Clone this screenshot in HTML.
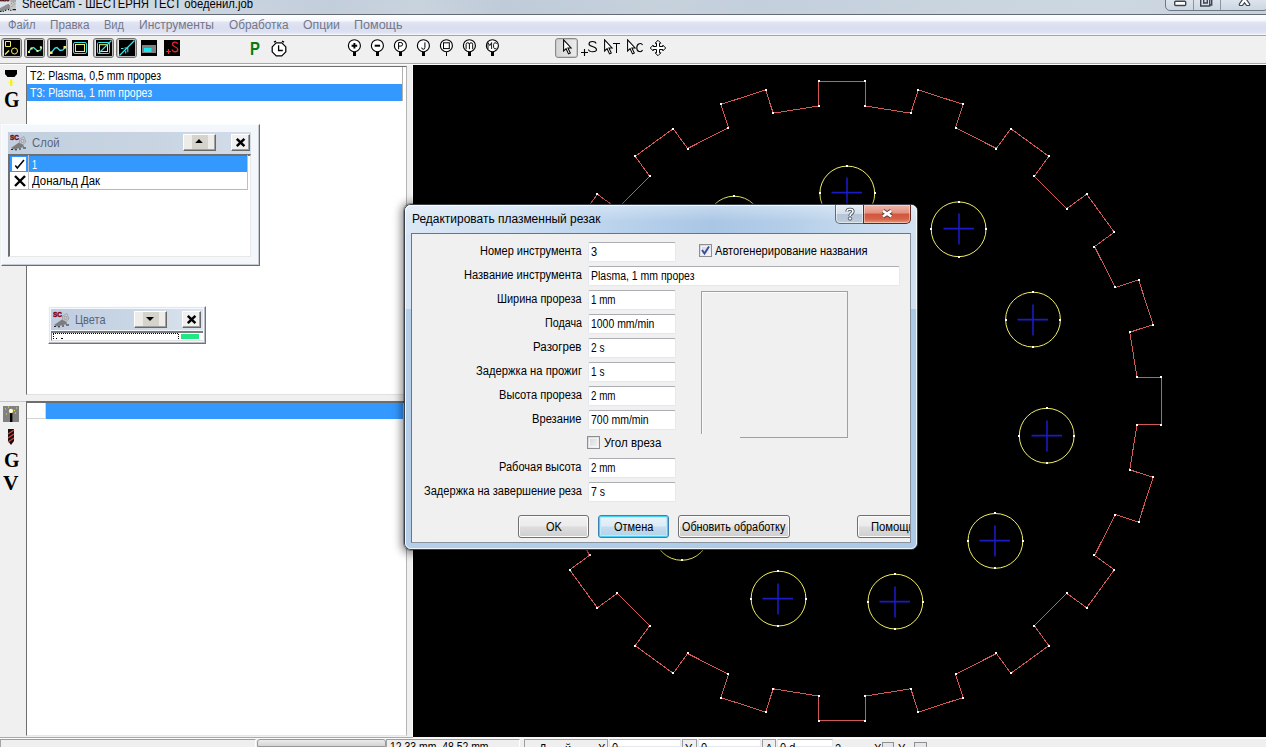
<!DOCTYPE html>
<html><head><meta charset="utf-8"><title>SheetCam</title><style>
*{box-sizing:border-box;margin:0;padding:0}
html,body{width:1266px;height:747px;overflow:hidden;background:#f0f0f0;font-family:"Liberation Sans",sans-serif;}
.a{position:absolute}
.tb{position:absolute;border:1px solid #8a8a8a;border-radius:3px;background:linear-gradient(#d8d8d8,#f4f4f4);box-shadow:inset 0 0 0 1px #c8c8c8}
.ic{position:absolute;width:16px;height:16px}
.fld{position:absolute;height:20px;background:#fff;border:1px solid #e3e9ef;border-top-color:#abadb3;border-radius:2px}
.btn{position:absolute;height:23px;border:1px solid #707070;border-radius:3px;background:linear-gradient(#f2f2f2 0%,#ebebeb 48%,#dddddd 52%,#cfcfcf 100%);box-shadow:inset 0 0 0 1px #fcfcfc}
.r3{position:absolute;background:#f0f0f0;border:1px solid;border-color:#fff #696969 #696969 #fff;box-shadow:inset -1px -1px 0 #a0a0a0}
</style></head><body>
<div class="a" style="left:0;top:0;width:1266px;height:14px;background:linear-gradient(90deg,#dbe2ea 0%,#cfd8e2 12%,#c3cedb 26%,#c9d3de 33%,#bfcbd8 40%,#c6d1dc 52%,#c3cfdb 60%,#c9d4df 75%,#cdd7e1 88%,#c6d1dc 100%)"></div>
<div class="a" style="left:0;top:14px;width:1266px;height:1px;background:#646b75"></div>
<svg class="a" style="left:0;top:0" width="18" height="13" viewBox="0 0 18 13"><rect x="0" y="0" width="9.5" height="1.4" fill="#d88a90"/><path d="M0.5 0v.8h2V0M3.5 0v.9h2.2V0M6.8 0v.8h2V0" fill="none" stroke="#3a0a10" stroke-width="1"/><path d="M0 8 L8.5 3.8 L11 6.5 L11 8.5 L3 11 L0 11.3Z" fill="#8e8e8e"/><path d="M0 10.2l3.5-1.2v2L0 11.6z" fill="#7a8a88"/><rect x="10" y="0" width="6" height="9" rx="1.5" fill="#c6c6c6"/><path d="M10.5 0h5.5v2h-5.5z" fill="#a8aaa8"/><path d="M11 3.5h1M13 2.5h1M12.5 5h1M11.5 6.5h1M14 4h1" stroke="#8a8a8a" stroke-width=".8"/><path d="M0 11.5h1.5M2.8 11.5h1M5 10.4h1.2M8 9.6h1.2M10 10.3h1.5M12.5 9.6h3.5" stroke="#181818" stroke-width="1.1"/></svg>
<span style="position:absolute;left:21.70px;top:-1.86px;font:normal 12px/12px 'Liberation Sans', sans-serif;color:#000;white-space:nowrap;transform-origin:0 0;transform:scaleX(0.9387);">SheetCam - ШЕСТЕРНЯ ТЕСТ обеденил.job</span>
<div class="a" style="left:1165px;top:-6px;width:103px;height:17px;border:1px solid #6d7885;border-radius:0 0 4px 5px;background:linear-gradient(#e4eaf1,#ccd6e1)"></div>
<div class="a" style="left:1193px;top:0;width:1px;height:10px;background:#8a95a3"></div><div class="a" style="left:1220px;top:0;width:1px;height:10px;background:#8a95a3"></div>
<svg class="a" style="left:1166px;top:0" width="100" height="10" viewBox="0 0 100 10" fill="none" stroke="#3c4550" stroke-width="1.4"><rect x="8.7" y="1.3" width="11" height="4.2" rx="1" fill="#fff"/><path d="M34.7 -1v7h9V-1M37.7 -1v4h3.6V-1M43.7 5h2V-1" /><path d="M77.2 -1.5 L73.4 4 Q72.9 5.5 74.5 5.5 H76.4 L78.5 2.8 L80.6 5.5 H82.5 Q84.1 5.5 83.6 4 L79.8 -1.5" fill="#fff" stroke-width="1.2"/></svg>
<div class="a" style="left:0;top:15px;width:1266px;height:19px;background:linear-gradient(#ffffff 0,#f6f7fc 6px,#e1e5f3 7px,#d9def0 13px,#dde1f2 17px,#e8ebf6 19px)"></div>
<div class="a" style="left:0;top:34px;width:1266px;height:1px;background:#f4f5fa"></div><div class="a" style="left:0;top:35px;width:1266px;height:1px;background:#a3a3a8"></div>
<span style="position:absolute;left:7.50px;top:19.04px;font:normal 12px/12px 'Liberation Sans', sans-serif;color:#73778a;white-space:nowrap;transform-origin:0 0;transform:scaleX(0.9317);">Файл</span>
<span style="position:absolute;left:50.00px;top:19.04px;font:normal 12px/12px 'Liberation Sans', sans-serif;color:#73778a;white-space:nowrap;transform-origin:0 0;transform:scaleX(0.9742);">Правка</span>
<span style="position:absolute;left:104.00px;top:19.04px;font:normal 12px/12px 'Liberation Sans', sans-serif;color:#73778a;white-space:nowrap;transform-origin:0 0;transform:scaleX(0.9209);">Вид</span>
<span style="position:absolute;left:139.00px;top:19.04px;font:normal 12px/12px 'Liberation Sans', sans-serif;color:#73778a;white-space:nowrap;transform-origin:0 0;transform:scaleX(1.0023);">Инструменты</span>
<span style="position:absolute;left:229.00px;top:19.04px;font:normal 12px/12px 'Liberation Sans', sans-serif;color:#73778a;white-space:nowrap;transform-origin:0 0;transform:scaleX(0.9830);">Обработка</span>
<span style="position:absolute;left:303.00px;top:19.04px;font:normal 12px/12px 'Liberation Sans', sans-serif;color:#73778a;white-space:nowrap;transform-origin:0 0;transform:scaleX(1.0242);">Опции</span>
<span style="position:absolute;left:354.00px;top:19.04px;font:normal 12px/12px 'Liberation Sans', sans-serif;color:#73778a;white-space:nowrap;transform-origin:0 0;transform:scaleX(1.0462);">Помощь</span>
<div class="a" style="left:0;top:36px;width:1266px;height:27px;background:#f0f0f0"></div>
<div class="a" style="left:0;top:63px;width:1266px;height:1px;background:#a8a8a8"></div><div class="a" style="left:0;top:64px;width:1266px;height:1px;background:#fdfdfd"></div>
<div class="tb" style="left:1px;top:38px;width:21px;height:20px;border-color:#707070;box-shadow:inset 0 0 0 1px #bababa;background:#e8e8e8"></div>
<div class="tb" style="left:24px;top:38px;width:21px;height:20px;border-color:#707070;box-shadow:inset 0 0 0 1px #bababa;background:#e8e8e8"></div>
<div class="tb" style="left:47px;top:38px;width:21px;height:20px;border-color:#707070;box-shadow:inset 0 0 0 1px #bababa;background:#e8e8e8"></div>
<div class="tb" style="left:93px;top:38px;width:21px;height:20px;border-color:#707070;box-shadow:inset 0 0 0 1px #bababa;background:#e8e8e8"></div>
<div class="tb" style="left:116px;top:38px;width:21px;height:20px;border-color:#707070;box-shadow:inset 0 0 0 1px #bababa;background:#e8e8e8"></div>
<svg class="ic" style="left:4px;top:40px" viewBox="0 0 16 16" fill="none"><rect width="16" height="16" fill="#000"/><path d="M1.5 1.5h5v5h-5z" stroke="#f0f060"/><circle cx="10.5" cy="11" r="3" stroke="#f0f060"/><path d="M1 14.5 L5 10.5" stroke="#f0f060" stroke-width="1.3"/></svg>
<svg class="ic" style="left:27px;top:40px" viewBox="0 0 16 16" fill="none"><rect width="16" height="16" fill="#000"/><path d="M1.5 12.5 L4 8.5 L6.5 7.5 L10.5 11 L13.5 10 L14.5 8 L13 6.5" stroke="#40e0e8" stroke-width="1.3"/><rect x="1" y="11" width="2" height="2" fill="#f0f060"/><rect x="3.5" y="7.5" width="2" height="2" fill="#f0f060"/><rect x="9.5" y="10" width="2" height="2" fill="#f0f060"/><rect x="13" y="6.5" width="2" height="2" fill="#f0f060"/></svg>
<svg class="ic" style="left:50px;top:40px" viewBox="0 0 16 16" fill="none"><rect width="16" height="16" fill="#000"/><path d="M1 13 L5 8 L7 7.5 L10 10.5 L13 10 L15 7.5" stroke="#40e0e8" stroke-width="1.3"/><rect x="0" y="11.5" width="2.5" height="2.5" fill="#f0f060"/><rect x="13.5" y="6" width="2.5" height="2.5" fill="#f0f060"/></svg>
<svg class="ic" style="left:72px;top:40px" viewBox="0 0 16 16" fill="none"><rect width="16" height="16" fill="#000"/><rect x="1.5" y="2.5" width="13" height="11" rx="1.5" stroke="#40e0e8"/><rect x="3.5" y="4.5" width="9" height="7" stroke="#f0f060"/></svg>
<svg class="ic" style="left:96px;top:40px" viewBox="0 0 16 16" fill="none"><rect width="16" height="16" fill="#000"/><rect x="1.5" y="2.5" width="12" height="11" rx="1" stroke="#40e0e8"/><rect x="3.5" y="4.7" width="8" height="6.8" stroke="#f0f060"/><path d="M2.5 13.5 L15.5 0.5" stroke="#40e0e8" stroke-width="1.1"/></svg>
<svg class="ic" style="left:119px;top:40px" viewBox="0 0 16 16" fill="none"><rect width="16" height="16" fill="#000"/><path d="M0.5 15.5 L15.5 0.5" stroke="#40e0e8" stroke-width="1.2"/><path d="M2 8.5h2.5 M5.5 8h3.3v4.3 M6.7 10.8v2.7" stroke="#40e0e8" stroke-width="1.1"/></svg>
<svg class="ic" style="left:141px;top:40px" viewBox="0 0 16 16" fill="none"><rect width="16" height="16" fill="#000"/><rect x="1" y="5" width="14" height="8" fill="#808080"/><rect x="3" y="8" width="7.5" height="4" fill="#18e8f0"/></svg>
<svg class="ic" style="left:164px;top:40px" viewBox="0 0 16 16" fill="none"><rect width="16" height="16" fill="#000"/><path d="M2 11.5h5M4.5 9v5" stroke="#e02828" stroke-width="1.2"/><path d="M13.5 4 C13 1.5 8.5 1.5 8.5 4.5 C8.5 7 13.8 6.5 13.8 9.5 C13.8 12.5 8.5 12.5 8.2 9.5" stroke="#e02828" stroke-width="1.3"/></svg>
<span style="position:absolute;left:250.20px;top:39.76px;font:bold 18px/18px 'Liberation Sans', sans-serif;color:#0a7a0a;white-space:nowrap;transform-origin:0 0;transform:scaleX(0.8239);">P</span>
<svg class="a" style="left:270px;top:39px" width="18" height="18" viewBox="0 0 18 18" fill="none" stroke="#000"><path d="M6.2 3.9h5.6l4 4v5l-4 4H6.2l-4-4v-5z" stroke-width="1.25" fill="#fff" stroke-linejoin="round"/><path d="M8.6 6.3v5.2h4.2" stroke-width="1.3"/><path d="M4 3.2 L6 2.2 M14 3.2 L12 2.2" stroke-width="1.4"/></svg>
<svg class="a" style="left:345px;top:37px" width="18" height="20" viewBox="-9 -9 18 20" fill="none" stroke="#000"><circle cx="0.4" cy="-0.3" r="6" fill="#fff" stroke-width="1.15"/><path d="M0.5 5.6v4.4" stroke-width="3" shape-rendering="crispEdges"/><path d="M-2.4 -0.3h5.6M0.4 -3.1v5.6" stroke-width="1.9"/></svg>
<svg class="a" style="left:368px;top:37px" width="18" height="20" viewBox="-9 -9 18 20" fill="none" stroke="#000"><circle cx="0.4" cy="-0.3" r="6" fill="#fff" stroke-width="1.15"/><path d="M0.5 5.6v4.4" stroke-width="3" shape-rendering="crispEdges"/><path d="M-2.3 -0.3h5.4" stroke-width="2"/></svg>
<svg class="a" style="left:391px;top:37px" width="18" height="20" viewBox="-9 -9 18 20" fill="none" stroke="#000"><circle cx="0.4" cy="-0.3" r="6" fill="#fff" stroke-width="1.15"/><path d="M0.5 5.6v4.4" stroke-width="3" shape-rendering="crispEdges"/><path d="M-1.4 3.3v-6.8h2.2a1.8 1.8 0 0 1 0 3.6H-1.4" stroke-width="1"/></svg>
<svg class="a" style="left:414px;top:37px" width="18" height="20" viewBox="-9 -9 18 20" fill="none" stroke="#000"><circle cx="0.4" cy="-0.3" r="6" fill="#fff" stroke-width="1.15"/><path d="M0.5 5.6v4.4" stroke-width="3" shape-rendering="crispEdges"/><path d="M1.9 -3.6v5.2a1.6 1.6 0 0 1 -3.2 0" stroke-width="1"/></svg>
<svg class="a" style="left:437px;top:37px" width="18" height="20" viewBox="-9 -9 18 20" fill="none" stroke="#000"><circle cx="0.4" cy="-0.3" r="6" fill="#fff" stroke-width="1.15"/><path d="M0.5 5.6v4.4" stroke-width="1" shape-rendering="crispEdges"/><rect x="-2.5" y="-3.2" width="5.8" height="5.8" stroke-width="1"/></svg>
<svg class="a" style="left:460px;top:37px" width="18" height="20" viewBox="-9 -9 18 20" fill="none" stroke="#000"><circle cx="0.4" cy="-0.3" r="6" fill="#fff" stroke-width="1.15"/><path d="M0.5 5.6v4.4" stroke-width="3" shape-rendering="crispEdges"/><path d="M-2.9 3.2v-4.8a1.65 1.65 0 0 1 3.3 0v4.8M0.4 -1.6a1.65 1.65 0 0 1 3.3 0v4.8" stroke-width="1"/></svg>
<svg class="a" style="left:483px;top:37px" width="18" height="20" viewBox="-9 -9 18 20" fill="none" stroke="#000"><circle cx="0.4" cy="-0.3" r="6" fill="#fff" stroke-width="1.15"/><path d="M0.5 5.6v4.4" stroke-width="3" shape-rendering="crispEdges"/><path d="M-4 3v-6.4l1.8 3l1.8-3v6.4 M4.6 -2.2a1.6 2 0 0 0 -3 .6v2.8a1.6 2 0 0 0 3 .6" stroke-width=".9"/></svg>
<div class="tb" style="left:555px;top:38px;width:23px;height:20px;background:linear-gradient(90deg,#d4d4d4,#ececec)"></div>
<svg class="a" style="left:563px;top:39px" width="12" height="18" viewBox="0 0 12 18"><path d="M0.6 0.8v11.2l2.5-2.3l2.4 5.2l1.8-0.9l-2.4-5h3.2z" fill="#fff" stroke="#000" stroke-width="1.05"/></svg>
<svg class="a" style="left:580px;top:39px" width="20" height="18" viewBox="0 0 20 18" fill="none" stroke="#000"><path d="M1 13.5h7M4.5 10v7" stroke-width="1.1"/><path d="M16 4.5C15.5 2 9 1.5 9 5C9 8 16.5 7 16.5 10.5C16.5 13.5 9 13.5 8.5 10.5" stroke-width="1.1"/></svg>
<svg class="a" style="left:604px;top:39px" width="20" height="18" viewBox="0 0 20 18"><path d="M0.6 0.8v11.2l2.5-2.3l2.4 5.2l1.8-0.9l-2.4-5h3.2z" fill="#fff" stroke="#000" stroke-width="1.05"/><path d="M9 4.5h7M12.5 4v10" stroke="#000" stroke-width="1" fill="none" shape-rendering="crispEdges"/></svg>
<svg class="a" style="left:627px;top:39px" width="20" height="18" viewBox="0 0 20 18"><path d="M0.6 0.8v11.2l2.5-2.3l2.4 5.2l1.8-0.9l-2.4-5h3.2z" fill="#fff" stroke="#000" stroke-width="1.05"/><path d="M15.5 6C14.5 3.8 9.8 3.8 9.8 8.7C9.8 13.5 14.5 13.5 15.5 11" stroke="#000" stroke-width="1.1" fill="none"/></svg>
<svg class="a" style="left:649px;top:39px" width="18" height="18" viewBox="-9 -9 18 18"><path d="M0 -7.7L2.9 -4.8H1.5V-1.5H4.8V-2.9L7.7 0L4.8 2.9V1.5H1.5V4.8H2.9L0 7.7L-2.9 4.8H-1.5V1.5H-4.8V2.9L-7.7 0L-4.8 -2.9V-1.5H-1.5V-4.8H-2.9Z" fill="#fff" stroke="#000" stroke-width="1" stroke-linejoin="miter"/></svg>
<div class="a" style="left:0;top:65px;width:413px;height:672px;background:#f0f0f0"></div>
<div class="a" style="left:26px;top:66px;width:381px;height:329px;background:#fff;border-left:1px solid #6e6e6e;border-top:1px solid #6e6e6e;border-right:1px solid #b4b4b4;border-bottom:1px solid #e0e0e0"></div>
<div class="a" style="left:402px;top:67px;width:1px;height:34px;background:#b0b0b0"></div>
<div class="a" style="left:27px;top:84px;width:375px;height:17px;background:#3399ff"></div>
<span style="position:absolute;left:30.00px;top:69.84px;font:normal 12px/12px 'Liberation Sans', sans-serif;color:#000;white-space:nowrap;transform-origin:0 0;transform:scaleX(0.8784);">T2: Plasma, 0,5 mm прорез</span>
<span style="position:absolute;left:30.00px;top:86.84px;font:normal 12px/12px 'Liberation Sans', sans-serif;color:#fff;white-space:nowrap;transform-origin:0 0;transform:scaleX(0.8769);">T3: Plasma, 1 mm прорез</span>
<div class="a" style="left:412px;top:65px;width:1px;height:673px;background:#fafafa"></div>
<svg class="a" style="left:4px;top:69px" width="15" height="18" viewBox="0 0 15 18"><path d="M1 1h12v4l-2.5 3h-7L1 5z" fill="#000"/><rect x="6" y="10.5" width="2.4" height="6.5" fill="#f4f020"/><path d="M4 13.5h1.2M9.2 13.5h1.2" stroke="#f6f480" stroke-width="1.5"/></svg>
<span style="position:absolute;left:4.00px;top:88.24px;font:bold 23px/23px 'Liberation Serif', serif;color:#000;white-space:nowrap;transform-origin:0 0;transform:scaleX(0.8664);">G</span>
<div class="a" style="left:0;top:401px;width:26px;height:1px;background:#c8c8c8"></div>
<div class="a" style="left:26px;top:401px;width:381px;height:335px;background:#fff;border-left:1px solid #6e6e6e;border-top:2px solid #6e6e6e;border-right:1px solid #b4b4b4;border-bottom:1px solid #e8e8e8"></div>
<div class="a" style="left:46px;top:403px;width:357px;height:16px;background:#3399ff"></div>
<div class="a" style="left:27px;top:418px;width:19px;height:1px;background:#d4d4d4"></div><div class="a" style="left:45px;top:403px;width:1px;height:16px;background:#d4d4d4"></div>
<svg class="a" style="left:3px;top:406px" width="16" height="16" viewBox="0 0 16 16"><rect width="16" height="16" fill="#808080"/><rect x="7" y="6" width="2.4" height="10" fill="#000"/><circle cx="8" cy="5" r="2.2" fill="#fff4b0"/><circle cx="8" cy="5" r="1.2" fill="#fff"/><path d="M2 3h1M13 2h1M3 8h1M12 7h1M5 1h1M11 4.5h1" stroke="#f8e060" stroke-width="1"/></svg>
<svg class="a" style="left:7px;top:428px" width="8" height="18" viewBox="0 0 8 18"><path d="M1 1h6v12l-3 4l-3-4z" fill="#181010"/><path d="M1 6l6-4M1 10l6-4M1 14l6-4" stroke="#d04848" stroke-width="1.3"/></svg>
<span style="position:absolute;left:3.50px;top:448.57px;font:bold 22px/22px 'Liberation Serif', serif;color:#000;white-space:nowrap;transform-origin:0 0;transform:scaleX(0.9051);">G</span>
<span style="position:absolute;left:2.50px;top:472.71px;font:bold 21px/21px 'Liberation Serif', serif;color:#000;white-space:nowrap;transform-origin:0 0;transform:scaleX(1.0216);">V</span>
<div class="a" style="left:1px;top:124px;width:259px;height:142px;background:#f3f6fa;border:1px solid;border-color:#fbfcfe #6b6b6b #6b6b6b #fbfcfe;box-shadow:inset -1px -1px 0 #c8ccd2"></div>
<div class="a" style="left:8px;top:132px;width:243px;height:22px;background:linear-gradient(90deg,#c2cfde,#c8d4e2 60%,#d3dde9)"></div>
<svg class="a" style="left:10px;top:134px" width="17" height="17" viewBox="0 0 17 17"><text x="0" y="6.2" font-family="Liberation Sans" font-weight="bold" font-size="7.5" fill="#d81428" stroke="#5a0008" stroke-width=".5" textLength="9" lengthAdjust="spacingAndGlyphs">SC</text><path d="M1 14 L9 8.5 L13 10 L14 13 L4 15.5z" fill="#7c7c7c"/><path d="M9.5 5l4.5-2.5l2 5.5l-3 2.5l-3.5-1.5z" fill="#c9ccd0" stroke="#8c9096" stroke-width=".6"/><circle cx="12.5" cy="6.9" r="1.6" fill="none" stroke="#8a8a8a" stroke-width=".7"/><path d="M1 15.5h2M5 15.8h2M9 15h2M13 14h3" stroke="#222" stroke-width="1"/></svg>
<span style="position:absolute;left:32.00px;top:135.50px;font:normal 13px/13px 'Liberation Sans', sans-serif;color:#56657c;white-space:nowrap;transform-origin:0 0;transform:scaleX(0.8696);">Слой</span>
<div class="r3" style="left:183px;top:134px;width:33px;height:17px;background:linear-gradient(90deg,#eeece8 0,#eeece8 8px,#d6d3cc 8px,#d6d3cc 24px,#eeece8 24px)"></div>
<svg class="a" style="left:194.5px;top:139.3px" width="8" height="4.2" viewBox="0 0 8 4.2"><path d="M0 4.2 L4 0 L8 4.2z" fill="#000"/></svg>
<div class="r3" style="left:231px;top:134px;width:19px;height:17px;"></div>
<svg class="a" style="left:235px;top:137px" width="11" height="11" viewBox="0 0 11 11"><path d="M1.8 1.8 L9.4 9.2 M9.4 1.8 L1.8 9.2" stroke="#000" stroke-width="2.5"/></svg>
<div class="a" style="left:8px;top:154px;width:243px;height:103px;background:#fff;border-left:2px solid #6e6e6e;border-top:2px solid #6e6e6e;border-right:1px solid #e8e8e8;border-bottom:1px solid #e8e8e8"></div>
<div class="a" style="left:10px;top:156px;width:238px;height:16px;background:#3399ff"></div>
<div class="a" style="left:12px;top:157px;width:14px;height:14px;background:#fff"></div>
<svg class="a" style="left:13px;top:158px" width="13" height="12" viewBox="0 0 13 12"><path d="M2.3 7.6 L4.3 10 L11 2" fill="none" stroke="#000" stroke-width="1.5"/></svg>
<span style="position:absolute;left:32.00px;top:158.84px;font:normal 12px/12px 'Liberation Sans', sans-serif;color:#fff;white-space:nowrap;transform-origin:0 0;transform:scaleX(0.7477);">1</span>
<svg class="a" style="left:14px;top:175px" width="12" height="12" viewBox="0 0 12 12"><path d="M1 1 L11 11 M11 1 L1 11" stroke="#000" stroke-width="2.4"/></svg>
<span style="position:absolute;left:32.00px;top:175.44px;font:normal 12px/12px 'Liberation Sans', sans-serif;color:#000;white-space:nowrap;transform-origin:0 0;transform:scaleX(0.9459);">Дональд Дак</span>
<div class="a" style="left:10px;top:189px;width:238px;height:1px;background:#b8b8b8"></div><div class="a" style="left:28px;top:155px;width:1px;height:35px;background:#c0c0c0"></div><div class="a" style="left:247px;top:155px;width:1px;height:35px;background:#c0c0c0"></div>
<div class="a" style="left:48px;top:306px;width:158px;height:38px;background:#f3f6fa;border:1px solid;border-color:#fbfcfe #70747a #70747a #fbfcfe;box-shadow:inset -1px -1px 0 #b8bcc2,inset 1px 1px 0 #e4e8ee"></div>
<div class="a" style="left:51px;top:309px;width:152px;height:21px;background:linear-gradient(90deg,#bfcde0,#c9d6e5 55%,#dce5f0)"></div>
<svg class="a" style="left:53px;top:311px" width="17" height="17" viewBox="0 0 17 17"><text x="0" y="6.2" font-family="Liberation Sans" font-weight="bold" font-size="7.5" fill="#d81428" stroke="#5a0008" stroke-width=".5" textLength="9" lengthAdjust="spacingAndGlyphs">SC</text><path d="M1 14 L9 8.5 L13 10 L14 13 L4 15.5z" fill="#7c7c7c"/><path d="M9.5 5l4.5-2.5l2 5.5l-3 2.5l-3.5-1.5z" fill="#c9ccd0" stroke="#8c9096" stroke-width=".6"/><circle cx="12.5" cy="6.9" r="1.6" fill="none" stroke="#8a8a8a" stroke-width=".7"/><path d="M1 15.5h2M5 15.8h2M9 15h2M13 14h3" stroke="#222" stroke-width="1"/></svg>
<span style="position:absolute;left:74.50px;top:313.00px;font:normal 13px/13px 'Liberation Sans', sans-serif;color:#56657c;white-space:nowrap;transform-origin:0 0;transform:scaleX(0.8421);">Цвета</span>
<div class="r3" style="left:134px;top:311px;width:33px;height:17px;background:linear-gradient(90deg,#eeece8 0,#eeece8 8px,#d6d3cc 8px,#d6d3cc 24px,#eeece8 24px)"></div>
<svg class="a" style="left:146px;top:317px" width="8" height="4" viewBox="0 0 8 4"><path d="M0 0 L8 0 L4 4z" fill="#000"/></svg>
<div class="r3" style="left:182px;top:311px;width:19px;height:17px;"></div>
<svg class="a" style="left:186px;top:314px" width="11" height="11" viewBox="0 0 11 11"><path d="M1.8 1.8 L9.4 9.2 M9.4 1.8 L1.8 9.2" stroke="#000" stroke-width="2.5"/></svg>
<div class="a" style="left:51px;top:331px;width:152px;height:10px;background:#fff;border-top:2px solid #7c7c7c;border-left:1px solid #7c7c7c;border-bottom:1px solid #e0e0e0"></div>
<div class="a" style="left:53px;top:333px;width:125px;height:1px;background:repeating-linear-gradient(90deg,#000 0,#000 1px,#fff 1px,#fff 2px)"></div>
<div class="a" style="left:53px;top:334px;width:1px;height:5px;background:repeating-linear-gradient(#000 0,#000 1px,#fff 1px,#fff 2px)"></div><div class="a" style="left:178px;top:334px;width:1px;height:5px;background:repeating-linear-gradient(#000 0,#000 1px,#fff 1px,#fff 2px)"></div>
<div class="a" style="left:56px;top:338px;width:1px;height:1px;background:#000"></div><div class="a" style="left:61px;top:338px;width:2px;height:1px;background:#000"></div>
<div class="a" style="left:181px;top:334px;width:18px;height:5px;background:#1ee884"></div>
<svg class="a" style="left:413px;top:65px;background:#000" width="853" height="672" viewBox="0 0 853 672" shape-rendering="crispEdges"><path d="M405.5 41.0 L405.5 16.5 L452.5 16.5 L452.5 41.0 L497.8 48.2 L505.4 24.9 L550.1 39.4 L542.5 62.7 L583.4 83.5 L597.8 63.7 L635.8 91.3 L621.4 111.2 L653.8 143.6 L673.7 129.2 L701.3 167.2 L681.5 181.6 L702.3 222.5 L725.6 214.9 L740.1 259.6 L716.8 267.2 L724.0 312.5 L748.5 312.5 L748.5 359.5 L724.0 359.5 L716.8 404.8 L740.1 412.4 L725.6 457.1 L702.3 449.5 L681.5 490.4 L701.3 504.8 L673.7 542.8 L653.8 528.4 L621.4 560.8 L635.8 580.7 L597.8 608.3 L583.4 588.5 L542.5 609.3 L550.1 632.6 L505.4 647.1 L497.8 623.8 L452.5 631.0 L452.5 655.5 L405.5 655.5 L405.5 631.0 L360.2 623.8 L352.6 647.1 L307.9 632.6 L315.5 609.3 L274.6 588.5 L260.2 608.3 L222.2 580.7 L236.6 560.8 L204.2 528.4 L184.3 542.8 L156.7 504.8 L176.5 490.4 L155.7 449.5 L132.4 457.1 L117.9 412.4 L141.2 404.8 L134.0 359.5 L109.5 359.5 L109.5 312.5 L134.0 312.5 L141.2 267.2 L117.9 259.6 L132.4 214.9 L155.7 222.5 L176.5 181.6 L156.7 167.2 L184.3 129.2 L204.2 143.6 L236.6 111.2 L222.2 91.3 L260.2 63.7 L274.6 83.5 L315.5 62.7 L307.9 39.4 L352.6 24.9 L360.2 48.2Z" fill="none" stroke="#d25858" stroke-width="1"/><circle cx="434.3" cy="128.5" r="27.4" fill="none" stroke="#f0ee64" stroke-width="1" shape-rendering="auto"/><path d="M418.5 127.6h30.5M434 112.5v31" stroke="#1a1ac6" stroke-width="1.6" shape-rendering="auto"/><circle cx="545.6" cy="164.3" r="27.4" fill="none" stroke="#f0ee64" stroke-width="1" shape-rendering="auto"/><path d="M530.5 163.6h30.5M546 148.5v31" stroke="#1a1ac6" stroke-width="1.6" shape-rendering="auto"/><circle cx="620.0" cy="254.6" r="27.4" fill="none" stroke="#f0ee64" stroke-width="1" shape-rendering="auto"/><path d="M604.5 254.6h30.5M620 239.5v31" stroke="#1a1ac6" stroke-width="1.6" shape-rendering="auto"/><circle cx="633.7" cy="370.7" r="27.4" fill="none" stroke="#f0ee64" stroke-width="1" shape-rendering="auto"/><path d="M618.5 370.6h30.5M634 355.5v31" stroke="#1a1ac6" stroke-width="1.6" shape-rendering="auto"/><circle cx="582.4" cy="475.9" r="27.4" fill="none" stroke="#f0ee64" stroke-width="1" shape-rendering="auto"/><path d="M566.5 475.6h30.5M582 460.5v31" stroke="#1a1ac6" stroke-width="1.6" shape-rendering="auto"/><circle cx="482.4" cy="536.6" r="27.4" fill="none" stroke="#f0ee64" stroke-width="1" shape-rendering="auto"/><path d="M466.5 536.6h30.5M482 521.5v31" stroke="#1a1ac6" stroke-width="1.6" shape-rendering="auto"/><circle cx="365.5" cy="533.6" r="27.4" fill="none" stroke="#f0ee64" stroke-width="1" shape-rendering="auto"/><path d="M349.5 533.6h30.5M365 518.5v31" stroke="#1a1ac6" stroke-width="1.6" shape-rendering="auto"/><circle cx="268.7" cy="467.9" r="27.4" fill="none" stroke="#f0ee64" stroke-width="1" shape-rendering="auto"/><path d="M253.5 467.6h30.5M269 452.5v31" stroke="#1a1ac6" stroke-width="1.6" shape-rendering="auto"/><circle cx="222.8" cy="360.3" r="27.4" fill="none" stroke="#f0ee64" stroke-width="1" shape-rendering="auto"/><path d="M207.5 359.6h30.5M223 344.5v31" stroke="#1a1ac6" stroke-width="1.6" shape-rendering="auto"/><circle cx="242.4" cy="245.0" r="27.4" fill="none" stroke="#f0ee64" stroke-width="1" shape-rendering="auto"/><path d="M226.5 244.6h30.5M242 229.5v31" stroke="#1a1ac6" stroke-width="1.6" shape-rendering="auto"/><circle cx="321.2" cy="158.6" r="27.4" fill="none" stroke="#f0ee64" stroke-width="1" shape-rendering="auto"/><path d="M305.5 158.6h30.5M321 143.5v31" stroke="#1a1ac6" stroke-width="1.6" shape-rendering="auto"/><rect x="405" y="40" width="2" height="2" fill="#fff"/><rect x="405" y="15" width="2" height="2" fill="#fff"/><rect x="451" y="15" width="2" height="2" fill="#fff"/><rect x="451" y="40" width="2" height="2" fill="#fff"/><rect x="497" y="47" width="2" height="2" fill="#fff"/><rect x="504" y="24" width="2" height="2" fill="#fff"/><rect x="549" y="38" width="2" height="2" fill="#fff"/><rect x="542" y="62" width="2" height="2" fill="#fff"/><rect x="582" y="83" width="2" height="2" fill="#fff"/><rect x="597" y="63" width="2" height="2" fill="#fff"/><rect x="635" y="90" width="2" height="2" fill="#fff"/><rect x="620" y="110" width="2" height="2" fill="#fff"/><rect x="653" y="143" width="2" height="2" fill="#fff"/><rect x="673" y="128" width="2" height="2" fill="#fff"/><rect x="700" y="166" width="2" height="2" fill="#fff"/><rect x="680" y="181" width="2" height="2" fill="#fff"/><rect x="701" y="221" width="2" height="2" fill="#fff"/><rect x="725" y="214" width="2" height="2" fill="#fff"/><rect x="739" y="259" width="2" height="2" fill="#fff"/><rect x="716" y="266" width="2" height="2" fill="#fff"/><rect x="723" y="311" width="2" height="2" fill="#fff"/><rect x="747" y="311" width="2" height="2" fill="#fff"/><rect x="747" y="359" width="2" height="2" fill="#fff"/><rect x="723" y="359" width="2" height="2" fill="#fff"/><rect x="716" y="404" width="2" height="2" fill="#fff"/><rect x="739" y="411" width="2" height="2" fill="#fff"/><rect x="725" y="456" width="2" height="2" fill="#fff"/><rect x="701" y="449" width="2" height="2" fill="#fff"/><rect x="680" y="489" width="2" height="2" fill="#fff"/><rect x="700" y="504" width="2" height="2" fill="#fff"/><rect x="673" y="542" width="2" height="2" fill="#fff"/><rect x="653" y="527" width="2" height="2" fill="#fff"/><rect x="620" y="560" width="2" height="2" fill="#fff"/><rect x="635" y="580" width="2" height="2" fill="#fff"/><rect x="597" y="607" width="2" height="2" fill="#fff"/><rect x="582" y="587" width="2" height="2" fill="#fff"/><rect x="542" y="608" width="2" height="2" fill="#fff"/><rect x="549" y="632" width="2" height="2" fill="#fff"/><rect x="504" y="646" width="2" height="2" fill="#fff"/><rect x="497" y="623" width="2" height="2" fill="#fff"/><rect x="451" y="630" width="2" height="2" fill="#fff"/><rect x="451" y="655" width="2" height="2" fill="#fff"/><rect x="405" y="655" width="2" height="2" fill="#fff"/><rect x="405" y="630" width="2" height="2" fill="#fff"/><rect x="359" y="623" width="2" height="2" fill="#fff"/><rect x="352" y="646" width="2" height="2" fill="#fff"/><rect x="307" y="632" width="2" height="2" fill="#fff"/><rect x="314" y="608" width="2" height="2" fill="#fff"/><rect x="274" y="587" width="2" height="2" fill="#fff"/><rect x="259" y="607" width="2" height="2" fill="#fff"/><rect x="221" y="580" width="2" height="2" fill="#fff"/><rect x="236" y="560" width="2" height="2" fill="#fff"/><rect x="203" y="527" width="2" height="2" fill="#fff"/><rect x="183" y="542" width="2" height="2" fill="#fff"/><rect x="156" y="504" width="2" height="2" fill="#fff"/><rect x="176" y="489" width="2" height="2" fill="#fff"/><rect x="155" y="449" width="2" height="2" fill="#fff"/><rect x="131" y="456" width="2" height="2" fill="#fff"/><rect x="117" y="411" width="2" height="2" fill="#fff"/><rect x="140" y="404" width="2" height="2" fill="#fff"/><rect x="133" y="359" width="2" height="2" fill="#fff"/><rect x="109" y="359" width="2" height="2" fill="#fff"/><rect x="109" y="312" width="2" height="2" fill="#fff"/><rect x="133" y="312" width="2" height="2" fill="#fff"/><rect x="140" y="266" width="2" height="2" fill="#fff"/><rect x="117" y="259" width="2" height="2" fill="#fff"/><rect x="131" y="214" width="2" height="2" fill="#fff"/><rect x="155" y="221" width="2" height="2" fill="#fff"/><rect x="176" y="181" width="2" height="2" fill="#fff"/><rect x="156" y="166" width="2" height="2" fill="#fff"/><rect x="183" y="128" width="2" height="2" fill="#fff"/><rect x="203" y="143" width="2" height="2" fill="#fff"/><rect x="236" y="110" width="2" height="2" fill="#fff"/><rect x="221" y="90" width="2" height="2" fill="#fff"/><rect x="259" y="63" width="2" height="2" fill="#fff"/><rect x="274" y="83" width="2" height="2" fill="#fff"/><rect x="314" y="62" width="2" height="2" fill="#fff"/><rect x="307" y="38" width="2" height="2" fill="#fff"/><rect x="352" y="24" width="2" height="2" fill="#fff"/><rect x="359" y="47" width="2" height="2" fill="#fff"/><rect x="433" y="100" width="2" height="2" fill="#fff"/><rect x="406" y="127" width="2" height="2" fill="#fff"/><rect x="461" y="127" width="2" height="2" fill="#fff"/><rect x="433" y="155" width="2" height="2" fill="#fff"/><rect x="545" y="136" width="2" height="2" fill="#fff"/><rect x="517" y="163" width="2" height="2" fill="#fff"/><rect x="572" y="163" width="2" height="2" fill="#fff"/><rect x="545" y="191" width="2" height="2" fill="#fff"/><rect x="619" y="226" width="2" height="2" fill="#fff"/><rect x="592" y="254" width="2" height="2" fill="#fff"/><rect x="646" y="254" width="2" height="2" fill="#fff"/><rect x="619" y="281" width="2" height="2" fill="#fff"/><rect x="633" y="342" width="2" height="2" fill="#fff"/><rect x="605" y="370" width="2" height="2" fill="#fff"/><rect x="660" y="370" width="2" height="2" fill="#fff"/><rect x="633" y="397" width="2" height="2" fill="#fff"/><rect x="581" y="447" width="2" height="2" fill="#fff"/><rect x="554" y="475" width="2" height="2" fill="#fff"/><rect x="609" y="475" width="2" height="2" fill="#fff"/><rect x="581" y="502" width="2" height="2" fill="#fff"/><rect x="481" y="508" width="2" height="2" fill="#fff"/><rect x="454" y="536" width="2" height="2" fill="#fff"/><rect x="509" y="536" width="2" height="2" fill="#fff"/><rect x="481" y="563" width="2" height="2" fill="#fff"/><rect x="364" y="505" width="2" height="2" fill="#fff"/><rect x="337" y="533" width="2" height="2" fill="#fff"/><rect x="392" y="533" width="2" height="2" fill="#fff"/><rect x="364" y="560" width="2" height="2" fill="#fff"/><rect x="268" y="440" width="2" height="2" fill="#fff"/><rect x="240" y="467" width="2" height="2" fill="#fff"/><rect x="295" y="467" width="2" height="2" fill="#fff"/><rect x="268" y="494" width="2" height="2" fill="#fff"/><rect x="222" y="332" width="2" height="2" fill="#fff"/><rect x="194" y="359" width="2" height="2" fill="#fff"/><rect x="249" y="359" width="2" height="2" fill="#fff"/><rect x="222" y="387" width="2" height="2" fill="#fff"/><rect x="241" y="217" width="2" height="2" fill="#fff"/><rect x="214" y="244" width="2" height="2" fill="#fff"/><rect x="269" y="244" width="2" height="2" fill="#fff"/><rect x="241" y="271" width="2" height="2" fill="#fff"/><rect x="320" y="130" width="2" height="2" fill="#fff"/><rect x="293" y="158" width="2" height="2" fill="#fff"/><rect x="348" y="158" width="2" height="2" fill="#fff"/><rect x="320" y="185" width="2" height="2" fill="#fff"/></svg>
<div class="a" style="left:404px;top:204px;width:514px;height:346px;border-radius:7px 7px 7px 7px;border:1px solid #3b4048;box-shadow:0 0 0 1px rgba(0,0,0,.25),0 1px 8px 3px rgba(0,0,0,.45);background:linear-gradient(90deg,#d6e4f4,#d0e0f2) 0 0/100% 104px no-repeat,linear-gradient(90deg,#b5cfe9,#a9c9e7)"></div>
<div class="a" style="left:405px;top:205px;width:512px;height:29px;border-radius:6px 6px 0 0;background:linear-gradient(90deg,#dbe7f5 0%,#cfe0f2 18%,#b9d2ec 42%,#a9c6e5 60%,#b4cee9 75%,#c8dbef 90%,#d3e2f2 100%)"></div>
<div class="a" style="left:405px;top:205px;width:512px;height:344px;border-radius:6px;border:1px solid rgba(255,255,255,.8)"></div>
<div class="a" style="left:405px;top:205px;width:512px;height:28px;border-radius:6px 6px 0 0;background:linear-gradient(rgba(255,255,255,.35),rgba(255,255,255,0) 60%)"></div>
<span style="position:absolute;left:412.30px;top:213.04px;font:normal 12px/12px 'Liberation Sans', sans-serif;color:#000;white-space:nowrap;transform-origin:0 0;transform:scaleX(0.9967);">Редактировать плазменный резак</span>
<div class="a" style="left:835px;top:205px;width:29px;height:19px;border:1px solid #5f6b7a;border-top:none;border-radius:0 0 0 5px;background:linear-gradient(#e6edf5 0,#d5dfeb 48%,#b5c4d6 50%,#bccbdc 100%);box-shadow:inset 0 0 0 1px rgba(255,255,255,.55)"></div>
<div class="a" style="left:863px;top:205px;width:48px;height:19px;border:1px solid #5a2a25;border-top:none;border-radius:0 0 5px 0;background:linear-gradient(#efb7aa 0,#e39080 45%,#d2553a 50%,#d6624a 78%,#e69878 100%);box-shadow:inset 0 0 0 1px rgba(255,255,255,.4)"></div>
<svg class="a" style="left:844px;top:207px" width="12" height="14" viewBox="0 0 12 14"><path d="M3 4.5C3 1.5 9 1.5 9 4.5C9 6.5 6 6.5 6 9" fill="none" stroke="#3a4452" stroke-width="3.2"/><path d="M3 4.5C3 1.5 9 1.5 9 4.5C9 6.5 6 6.5 6 9" fill="none" stroke="#fff" stroke-width="1.6"/><circle cx="6" cy="11.5" r="1.7" fill="#fff" stroke="#3a4452" stroke-width=".9"/></svg>
<svg class="a" style="left:880px;top:208px" width="15" height="13" viewBox="0 0 15 13"><path d="M2.9 2.9 L11.3 8.5 M11.3 2.9 L2.9 8.5" stroke="#5a3a38" stroke-width="4.4"/><path d="M2.9 2.9 L11.3 8.5 M11.3 2.9 L2.9 8.5" stroke="#fff" stroke-width="2.7"/></svg>
<div class="a" style="left:411px;top:233px;width:500px;height:310px;background:#f0f0f0;border:1px solid #6c7480;border-color:#6c7480 #8a94a0 #8a94a0 #6c7480"></div>
<span style="position:absolute;left:479.80px;top:245.34px;font:normal 12px/12px 'Liberation Sans', sans-serif;color:#000;white-space:nowrap;transform-origin:0 0;transform:scaleX(0.9154);">Номер инструмента</span>
<div class="fld" style="left:588px;top:242px;width:88px"></div>
<span style="position:absolute;left:590.50px;top:245.84px;font:normal 12px/12px 'Liberation Sans', sans-serif;color:#000;white-space:nowrap;transform-origin:0 0;transform:scaleX(0.9150);">3</span>
<span style="position:absolute;left:463.50px;top:269.34px;font:normal 12px/12px 'Liberation Sans', sans-serif;color:#000;white-space:nowrap;transform-origin:0 0;transform:scaleX(0.9235);">Название инструмента</span>
<div class="fld" style="left:588px;top:266px;width:312px"></div>
<span style="position:absolute;left:590.50px;top:269.84px;font:normal 12px/12px 'Liberation Sans', sans-serif;color:#000;white-space:nowrap;transform-origin:0 0;transform:scaleX(0.8738);">Plasma, 1 mm прорез</span>
<span style="position:absolute;left:497.00px;top:293.34px;font:normal 12px/12px 'Liberation Sans', sans-serif;color:#000;white-space:nowrap;transform-origin:0 0;transform:scaleX(0.9103);">Ширина прореза</span>
<div class="fld" style="left:588px;top:290px;width:88px"></div>
<span style="position:absolute;left:590.50px;top:293.84px;font:normal 12px/12px 'Liberation Sans', sans-serif;color:#000;white-space:nowrap;transform-origin:0 0;transform:scaleX(0.8167);">1 mm</span>
<span style="position:absolute;left:544.50px;top:317.34px;font:normal 12px/12px 'Liberation Sans', sans-serif;color:#000;white-space:nowrap;transform-origin:0 0;transform:scaleX(0.8943);">Подача</span>
<div class="fld" style="left:588px;top:314px;width:88px"></div>
<span style="position:absolute;left:590.50px;top:317.84px;font:normal 12px/12px 'Liberation Sans', sans-serif;color:#000;white-space:nowrap;transform-origin:0 0;transform:scaleX(0.8707);">1000 mm/min</span>
<span style="position:absolute;left:533.00px;top:341.34px;font:normal 12px/12px 'Liberation Sans', sans-serif;color:#000;white-space:nowrap;transform-origin:0 0;transform:scaleX(0.9643);">Разогрев</span>
<div class="fld" style="left:588px;top:338px;width:88px"></div>
<span style="position:absolute;left:590.50px;top:341.84px;font:normal 12px/12px 'Liberation Sans', sans-serif;color:#000;white-space:nowrap;transform-origin:0 0;transform:scaleX(0.8429);">2 s</span>
<span style="position:absolute;left:475.50px;top:365.34px;font:normal 12px/12px 'Liberation Sans', sans-serif;color:#000;white-space:nowrap;transform-origin:0 0;transform:scaleX(0.9357);">Задержка на прожиг</span>
<div class="fld" style="left:588px;top:362px;width:88px"></div>
<span style="position:absolute;left:590.50px;top:365.84px;font:normal 12px/12px 'Liberation Sans', sans-serif;color:#000;white-space:nowrap;transform-origin:0 0;transform:scaleX(0.8429);">1 s</span>
<span style="position:absolute;left:498.50px;top:389.34px;font:normal 12px/12px 'Liberation Sans', sans-serif;color:#000;white-space:nowrap;transform-origin:0 0;transform:scaleX(0.9258);">Высота прореза</span>
<div class="fld" style="left:588px;top:386px;width:88px"></div>
<span style="position:absolute;left:590.50px;top:389.84px;font:normal 12px/12px 'Liberation Sans', sans-serif;color:#000;white-space:nowrap;transform-origin:0 0;transform:scaleX(0.8167);">2 mm</span>
<span style="position:absolute;left:532.00px;top:413.34px;font:normal 12px/12px 'Liberation Sans', sans-serif;color:#000;white-space:nowrap;transform-origin:0 0;transform:scaleX(0.9290);">Врезание</span>
<div class="fld" style="left:588px;top:410px;width:88px"></div>
<span style="position:absolute;left:590.50px;top:413.84px;font:normal 12px/12px 'Liberation Sans', sans-serif;color:#000;white-space:nowrap;transform-origin:0 0;transform:scaleX(0.8738);">700 mm/min</span>
<span style="position:absolute;left:499.00px;top:461.34px;font:normal 12px/12px 'Liberation Sans', sans-serif;color:#000;white-space:nowrap;transform-origin:0 0;transform:scaleX(0.9176);">Рабочая высота</span>
<div class="fld" style="left:588px;top:458px;width:88px"></div>
<span style="position:absolute;left:590.50px;top:461.84px;font:normal 12px/12px 'Liberation Sans', sans-serif;color:#000;white-space:nowrap;transform-origin:0 0;transform:scaleX(0.8167);">2 mm</span>
<span style="position:absolute;left:423.50px;top:485.34px;font:normal 12px/12px 'Liberation Sans', sans-serif;color:#000;white-space:nowrap;transform-origin:0 0;transform:scaleX(0.9233);">Задержка на завершение реза</span>
<div class="fld" style="left:588px;top:482px;width:88px"></div>
<span style="position:absolute;left:590.50px;top:485.84px;font:normal 12px/12px 'Liberation Sans', sans-serif;color:#000;white-space:nowrap;transform-origin:0 0;transform:scaleX(0.8741);">7 s</span>
<div class="a" style="left:699px;top:244px;width:13px;height:13px;border:1px solid #8e8f8f;background:linear-gradient(135deg,#cfd3dc,#f4f5f8)"><div style="position:absolute;left:1px;top:1px;right:1px;bottom:1px;border:1px solid #f4f4f4"></div></div>
<svg class="a" style="left:700px;top:245px" width="11" height="11" viewBox="0 0 11 11"><path d="M2 5 L4.5 8.5 L9 1.5" fill="none" stroke="#3a4a9c" stroke-width="1.9"/></svg>
<span style="position:absolute;left:715.00px;top:245.34px;font:normal 12px/12px 'Liberation Sans', sans-serif;color:#000;white-space:nowrap;transform-origin:0 0;transform:scaleX(0.9270);">Автогенерирование названия</span>
<div class="a" style="left:587px;top:436px;width:13px;height:13px;border:1px solid #8e8f8f;background:linear-gradient(135deg,#cfd3d8,#f6f6f6)"><div style="position:absolute;left:1px;top:1px;right:1px;bottom:1px;border:1px solid #f4f4f4"></div></div>
<span style="position:absolute;left:603.70px;top:436.84px;font:normal 12px/12px 'Liberation Sans', sans-serif;color:#000;white-space:nowrap;transform-origin:0 0;transform:scaleX(0.9618);">Угол вреза</span>
<div class="a" style="left:701px;top:291px;width:147px;height:1px;background:#a0a0a0"></div><div class="a" style="left:701px;top:291px;width:1px;height:143px;background:#a0a0a0"></div><div class="a" style="left:847px;top:291px;width:1px;height:147px;background:#a0a0a0"></div><div class="a" style="left:740px;top:437px;width:108px;height:1px;background:#a0a0a0"></div>
<div class="a" style="left:702px;top:292px;width:145px;height:1px;background:#fafafa"></div><div class="a" style="left:702px;top:292px;width:1px;height:142px;background:#fafafa"></div>
<div class="btn" style="left:518px;top:515px;width:71px"></div>
<span style="position:absolute;left:545.57px;top:521.14px;font:normal 12px/12px 'Liberation Sans', sans-serif;color:#000;white-space:nowrap;transform-origin:0 0;transform:scaleX(0.9150);">OK</span>
<div class="btn" style="left:598px;top:515px;width:71px;border-color:#3c7fb1;box-shadow:inset 0 0 0 1px #48d0f4,inset 0 0 0 2px #bfe9fa;background:linear-gradient(#eaf4fb 0%,#dcebf6 48%,#c4dcee 52%,#b4d2e8 100%)"></div>
<span style="position:absolute;left:613.80px;top:521.14px;font:normal 12px/12px 'Liberation Sans', sans-serif;color:#000;white-space:nowrap;transform-origin:0 0;transform:scaleX(0.9150);">Отмена</span>
<div class="btn" style="left:678px;top:515px;width:112px"></div>
<span style="position:absolute;left:681.85px;top:521.14px;font:normal 12px/12px 'Liberation Sans', sans-serif;color:#000;white-space:nowrap;transform-origin:0 0;transform:scaleX(0.9003);">Обновить обработку</span>
<div class="a" style="left:857px;top:515px;width:53px;height:23px;overflow:hidden"><div class="btn" style="left:0;top:0;width:75px"></div></div>
<span style="position:absolute;left:871.00px;top:521.14px;font:normal 12px/12px 'Liberation Sans', sans-serif;color:#000;white-space:nowrap;transform-origin:0 0;transform:scaleX(0.9383);clip-path:inset(0 4.8px 0 0);">Помощь</span>
<div class="a" style="left:0;top:737px;width:1266px;height:10px;background:#efefef"></div>
<div class="a" style="left:0;top:737px;width:413px;height:1px;background:#aaaaaa"></div><div class="a" style="left:413px;top:737px;width:853px;height:1px;background:#f6f6f6"></div><div class="a" style="left:0;top:738px;width:1266px;height:1px;background:#fbfbfb"></div>
<div class="a" style="left:0;top:739px;width:256px;height:8px;border-top:1px solid #9c9c9c;border-left:1px solid #a4a4a4;border-right:1px solid #fff"></div>
<div class="a" style="left:257px;top:739px;width:129px;height:8px;border:1px solid #989898;border-radius:3px 3px 0 0;background:linear-gradient(#ececec,#d4d4d4)"></div>
<div class="a" style="left:386px;top:739px;width:134px;height:8px;border-top:1px solid #9c9c9c;border-left:1px solid #a4a4a4;border-right:1px solid #fff"></div>
<div class="a" style="left:524px;top:739px;width:84px;height:8px;border:1px solid #9c9c9c;border-bottom:none"></div>
<span style="position:absolute;left:390.30px;top:741.04px;font:normal 12px/12px 'Liberation Sans', sans-serif;color:#000;white-space:nowrap;transform-origin:0 0;transform:scaleX(0.8687);">12.33 mm, 48.52 mm</span>
<span style="position:absolute;left:538.50px;top:742.84px;font:normal 12px/12px 'Liberation Sans', sans-serif;color:#000;white-space:nowrap;transform-origin:0 0;transform:scaleX(0.9150);">Д</span>
<span style="position:absolute;left:565.00px;top:742.84px;font:normal 12px/12px 'Liberation Sans', sans-serif;color:#000;white-space:nowrap;transform-origin:0 0;transform:scaleX(0.9150);">й</span>
<span style="position:absolute;left:597.80px;top:742.84px;font:normal 12px/12px 'Liberation Sans', sans-serif;color:#000;white-space:nowrap;transform-origin:0 0;transform:scaleX(0.9357);">X</span>
<div class="a" style="left:609px;top:739px;width:72px;height:8px;background:#fff;border:1px solid #e3e9ef;border-top-color:#abadb3"></div>
<span style="position:absolute;left:611.50px;top:742.44px;font:normal 12px/12px 'Liberation Sans', sans-serif;color:#000;white-space:nowrap;transform-origin:0 0;transform:scaleX(0.9150);">0</span>
<div class="a" style="left:682px;top:739px;width:15px;height:8px;border:1px solid #9a9a9a;border-bottom:none"></div>
<span style="position:absolute;left:685.00px;top:742.84px;font:normal 12px/12px 'Liberation Sans', sans-serif;color:#000;white-space:nowrap;transform-origin:0 0;transform:scaleX(0.9357);">Y</span>
<div class="a" style="left:698px;top:739px;width:63px;height:8px;background:#fff;border:1px solid #e3e9ef;border-top-color:#abadb3"></div>
<span style="position:absolute;left:701.00px;top:742.44px;font:normal 12px/12px 'Liberation Sans', sans-serif;color:#000;white-space:nowrap;transform-origin:0 0;transform:scaleX(0.9150);">0</span>
<div class="a" style="left:762px;top:739px;width:14px;height:8px;border:1px solid #9a9a9a;border-bottom:none"></div>
<span style="position:absolute;left:764.50px;top:742.84px;font:normal 12px/12px 'Liberation Sans', sans-serif;color:#000;white-space:nowrap;transform-origin:0 0;transform:scaleX(0.9981);">A</span>
<div class="a" style="left:777px;top:739px;width:56px;height:8px;background:#fff;border:1px solid #e3e9ef;border-top-color:#abadb3"></div>
<span style="position:absolute;left:780.00px;top:742.44px;font:normal 12px/12px 'Liberation Sans', sans-serif;color:#000;white-space:nowrap;transform-origin:0 0;transform:scaleX(0.9150);">0 d</span>
<span style="position:absolute;left:835.00px;top:742.64px;font:normal 12px/12px 'Liberation Sans', sans-serif;color:#000;white-space:nowrap;transform-origin:0 0;transform:scaleX(0.9150);">2</span>
<span style="position:absolute;left:873.50px;top:742.84px;font:normal 12px/12px 'Liberation Sans', sans-serif;color:#000;white-space:nowrap;transform-origin:0 0;transform:scaleX(0.9357);">X</span>
<div class="a" style="left:882px;top:742px;width:12px;height:5px;border:1px solid #8e8f8f;border-bottom:none;background:#e4e6ea"></div>
<span style="position:absolute;left:898.00px;top:742.84px;font:normal 12px/12px 'Liberation Sans', sans-serif;color:#000;white-space:nowrap;transform-origin:0 0;transform:scaleX(0.9357);">Y</span>
<div class="a" style="left:914px;top:742px;width:13px;height:5px;border:1px solid #8e8f8f;border-bottom:none;background:#e4e6ea"></div>
</body></html>
